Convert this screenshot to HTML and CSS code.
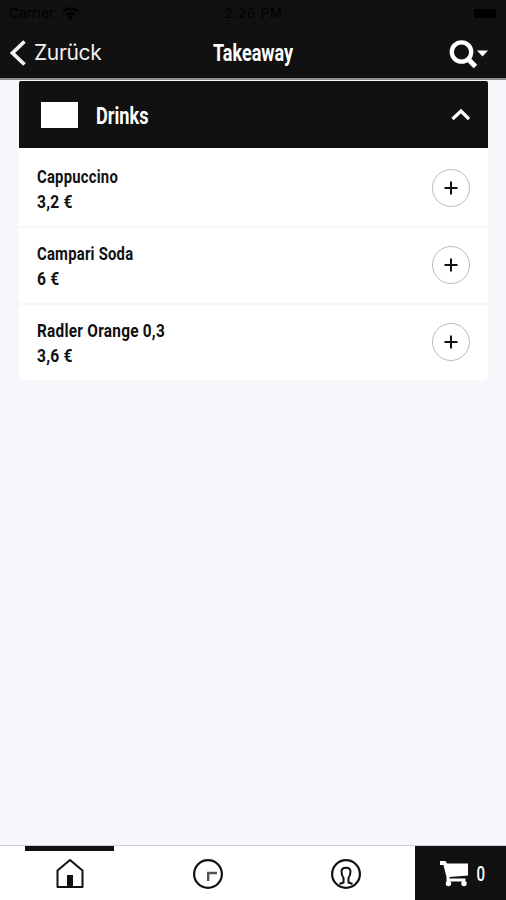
FILE: index.html
```html
<!DOCTYPE html>
<html lang="de">
<head>
<meta charset="utf-8">
<title>Takeaway</title>
<link rel="stylesheet" href="styles.css">
</head>
<body>
<div class="app">
  <header class="top">
    <div class="status">
      <div class="carrier">Carrier
        <svg width="17" height="13" viewBox="0 0 17 13" fill="none" stroke="currentColor" stroke-width="2.3"><path d="M1 4.5Q8.5-1.5 16 4.5M4 8Q8.500 4 13 8"/><circle cx="8.500" cy="10.500" r="1"/></svg>
      </div>
      <div class="time">2:26 PM</div>
      <div class="power"><i class="battery"></i></div>
    </div>
    <nav class="nav">
      <a class="back"><svg width="18" height="28" viewBox="0 0 18 28" fill="none" stroke="currentColor" stroke-width="3.8"><path d="M15.500 2.500L3.500 14L15.500 25.500"/></svg><span>Zurück</span></a>
      <h1 class="title"><span class="narrow">Takeaway</span></h1>
      <a class="search"><svg width="40" height="30" viewBox="0 0 40 30"><circle cx="12.500" cy="14" r="9.700" fill="none" stroke="currentColor" stroke-width="4.300"/><path d="M19 21L26.500 28.500" fill="none" stroke="currentColor" stroke-width="5"/><path d="M28 12.500H39L33.500 18.500Z" fill="currentColor"/></svg></a>
    </nav>
  </header>
  <main class="content">
    <section class="card">
      <div class="group">
        <i class="thumb"></i>
        <h2 class="group-name"><span class="narrow">Drinks</span></h2>
        <svg width="20" height="13" viewBox="0 0 20 13" fill="none" stroke="currentColor" stroke-width="3.200"><path d="M2.500 11L11 3L19 11"/></svg>
      </div>
      <div class="item">
        <div class="info"><div class="narrow">Cappuccino</div><div class="narrow price">3,2 €</div></div>
        <button class="add" aria-label="Cappuccino"><svg width="14" height="14" viewBox="0 0 14 14" stroke="currentColor" stroke-width="2"><path d="M7 .5V13.500M.5 7H13.500"/></svg></button>
      </div>
      <div class="item">
        <div class="info"><div class="narrow campari">Campari Soda</div><div class="narrow price">6 €</div></div>
        <button class="add" aria-label="Campari Soda"><svg width="14" height="14" viewBox="0 0 14 14" stroke="currentColor" stroke-width="2"><path d="M7 .5V13.500M.5 7H13.500"/></svg></button>
      </div>
      <div class="item">
        <div class="info"><div class="narrow radler">Radler Orange 0,3</div><div class="narrow price">3,6 €</div></div>
        <button class="add" aria-label="Radler Orange 0,3"><svg width="14" height="14" viewBox="0 0 14 14" stroke="currentColor" stroke-width="2"><path d="M7 .5V13.500M.5 7H13.500"/></svg></button>
      </div>
    </section>
  </main>
  <footer class="tabs">
    <a class="tab active"><svg width="30" height="32" viewBox="0 0 30 32"><path d="M2.500 29V12.500L15 2L27.500 12.500V29Z" fill="none" stroke="currentColor" stroke-width="2" stroke-linejoin="round"/><path d="M12 17H18V29H12Z" fill="currentColor"/></svg></a>
    <a class="tab"><svg width="32" height="32" viewBox="0 0 32 32" fill="none" stroke="currentColor"><circle cx="16" cy="16" r="13.900" stroke-width="2.200"/><path d="M16.200 23V15H25" stroke="#555" stroke-width="2.400"/></svg></a>
    <a class="tab"><svg width="32" height="32" viewBox="0 0 32 32" fill="none" stroke="currentColor"><circle cx="16" cy="16" r="13.900" stroke-width="2.200"/><path d="M9.500 26L13.500 24.500V20Q11.500 17 11.500 13.500Q11.500 9.700 16 9.700Q20.500 9.700 20.500 13.500Q20.500 17 18.500 20V24.500L22.500 26" stroke-width="2"/></svg></a>
    <a class="cart"><svg width="30" height="28" viewBox="0 0 30 28"><path d="M1 1H6.500L8 3.500H29V15.500L10.500 17V18.500H26.500V21.500H7.500V17L4.500 5H1Z" fill="currentColor"/><circle cx="9.500" cy="23.500" r="2.700" fill="currentColor"/><circle cx="25" cy="23.500" r="2.700" fill="currentColor"/></svg><span class="count">0</span></a>
  </footer>
</div>
</body>
</html>
```

FILE: styles.css
```css
* { box-sizing: border-box; }
body { margin: 0; font-family: Roboto, "Liberation Sans", sans-serif; }
svg { display: block; }
.app { height: 900px; display: flex; flex-direction: column; background: #f5f7fb; color: #111; overflow: hidden; }
.top { height: 80px; background: #111; border-bottom: 2px solid #8c8c8c; flex: none; }
.status { height: 26px; padding: 0 10px 0 9px; display: grid; grid-template-columns: 1fr auto 1fr; align-items: center; color: #000; font: 13.5px Inter, sans-serif; }
.carrier { display: flex; align-items: center; gap: 7px; letter-spacing: .2px; }
.time { margin-left: 2px; letter-spacing: .7px; }
.power { display: flex; justify-content: flex-end; }
.battery { width: 22px; height: 9px; background: #000; border-radius: 2px; }
.nav { height: 52px; padding: 1px 17px 0 9px; display: grid; grid-template-columns: 1fr auto 1fr; align-items: center; color: #fff; }
.back { display: flex; align-items: center; gap: 7px; font: 21px/26px Inter, sans-serif; letter-spacing: -.35px; color: #f2f2f2; }
.narrow { display: block; width: max-content; transform: scaleX(.78); transform-origin: left; font-weight: 700; white-space: nowrap; }
.title { margin: 0 0 0 8px; width: 80px; font-size: 24px; line-height: 28px; }
.title .narrow { transform: scaleX(.75); }
.search { justify-self: end; }
.content { flex: 1; padding: 1px 18px 0 19px; }
.card { border-radius: 2px 2px 5px 5px; overflow: hidden; background: #fff; }
.group { height: 67px; padding: 0 18px 0 22px; display: flex; align-items: center; background: #111; color: #fff; }
.thumb { width: 37px; height: 26px; margin-right: 18px; background: #fff; }
.group-name { margin: 4px 0 0; flex: 1; font-size: 23px; line-height: 28px; }
.group-name .narrow { transform: scaleX(.79); }
.item { height: 77px; padding: 0 18px 2px; display: flex; align-items: center; justify-content: space-between; }
.item + .item { border-top: 2px solid #f5f6f8; }
.item:nth-child(2) { height: 78px; padding: 1px 18px 0; }
.info { font-size: 19px; line-height: 25px; letter-spacing: .3px; padding-top: 2px; }
.campari { transform: scaleX(.78); }
.radler { transform: scaleX(.81); }
.price { transform: scaleX(.82); }
.add { width: 38px; height: 38px; padding: 0; border: 1px solid #bbb; border-radius: 50%; background: #fff; color: #111; display: grid; place-items: center; }
.tabs { height: 55px; flex: none; display: grid; grid-template-columns: repeat(3, 138.3px) 1fr; background: #fff; border-top: 1px solid #cfd0d5; }
.tab { display: flex; justify-content: center; align-items: center; padding: 2px 0 0 1px; position: relative; }
.active::before { content: ""; position: absolute; top: 0; left: 25px; width: 89px; height: 5px; background: #111; }
.cart { display: flex; align-items: center; padding: 1px 0 0 24px; gap: 6px; background: #111; color: #fff; font-size: 20px; }
.count { transform: scaleX(.75); font-weight: 500; }
```
